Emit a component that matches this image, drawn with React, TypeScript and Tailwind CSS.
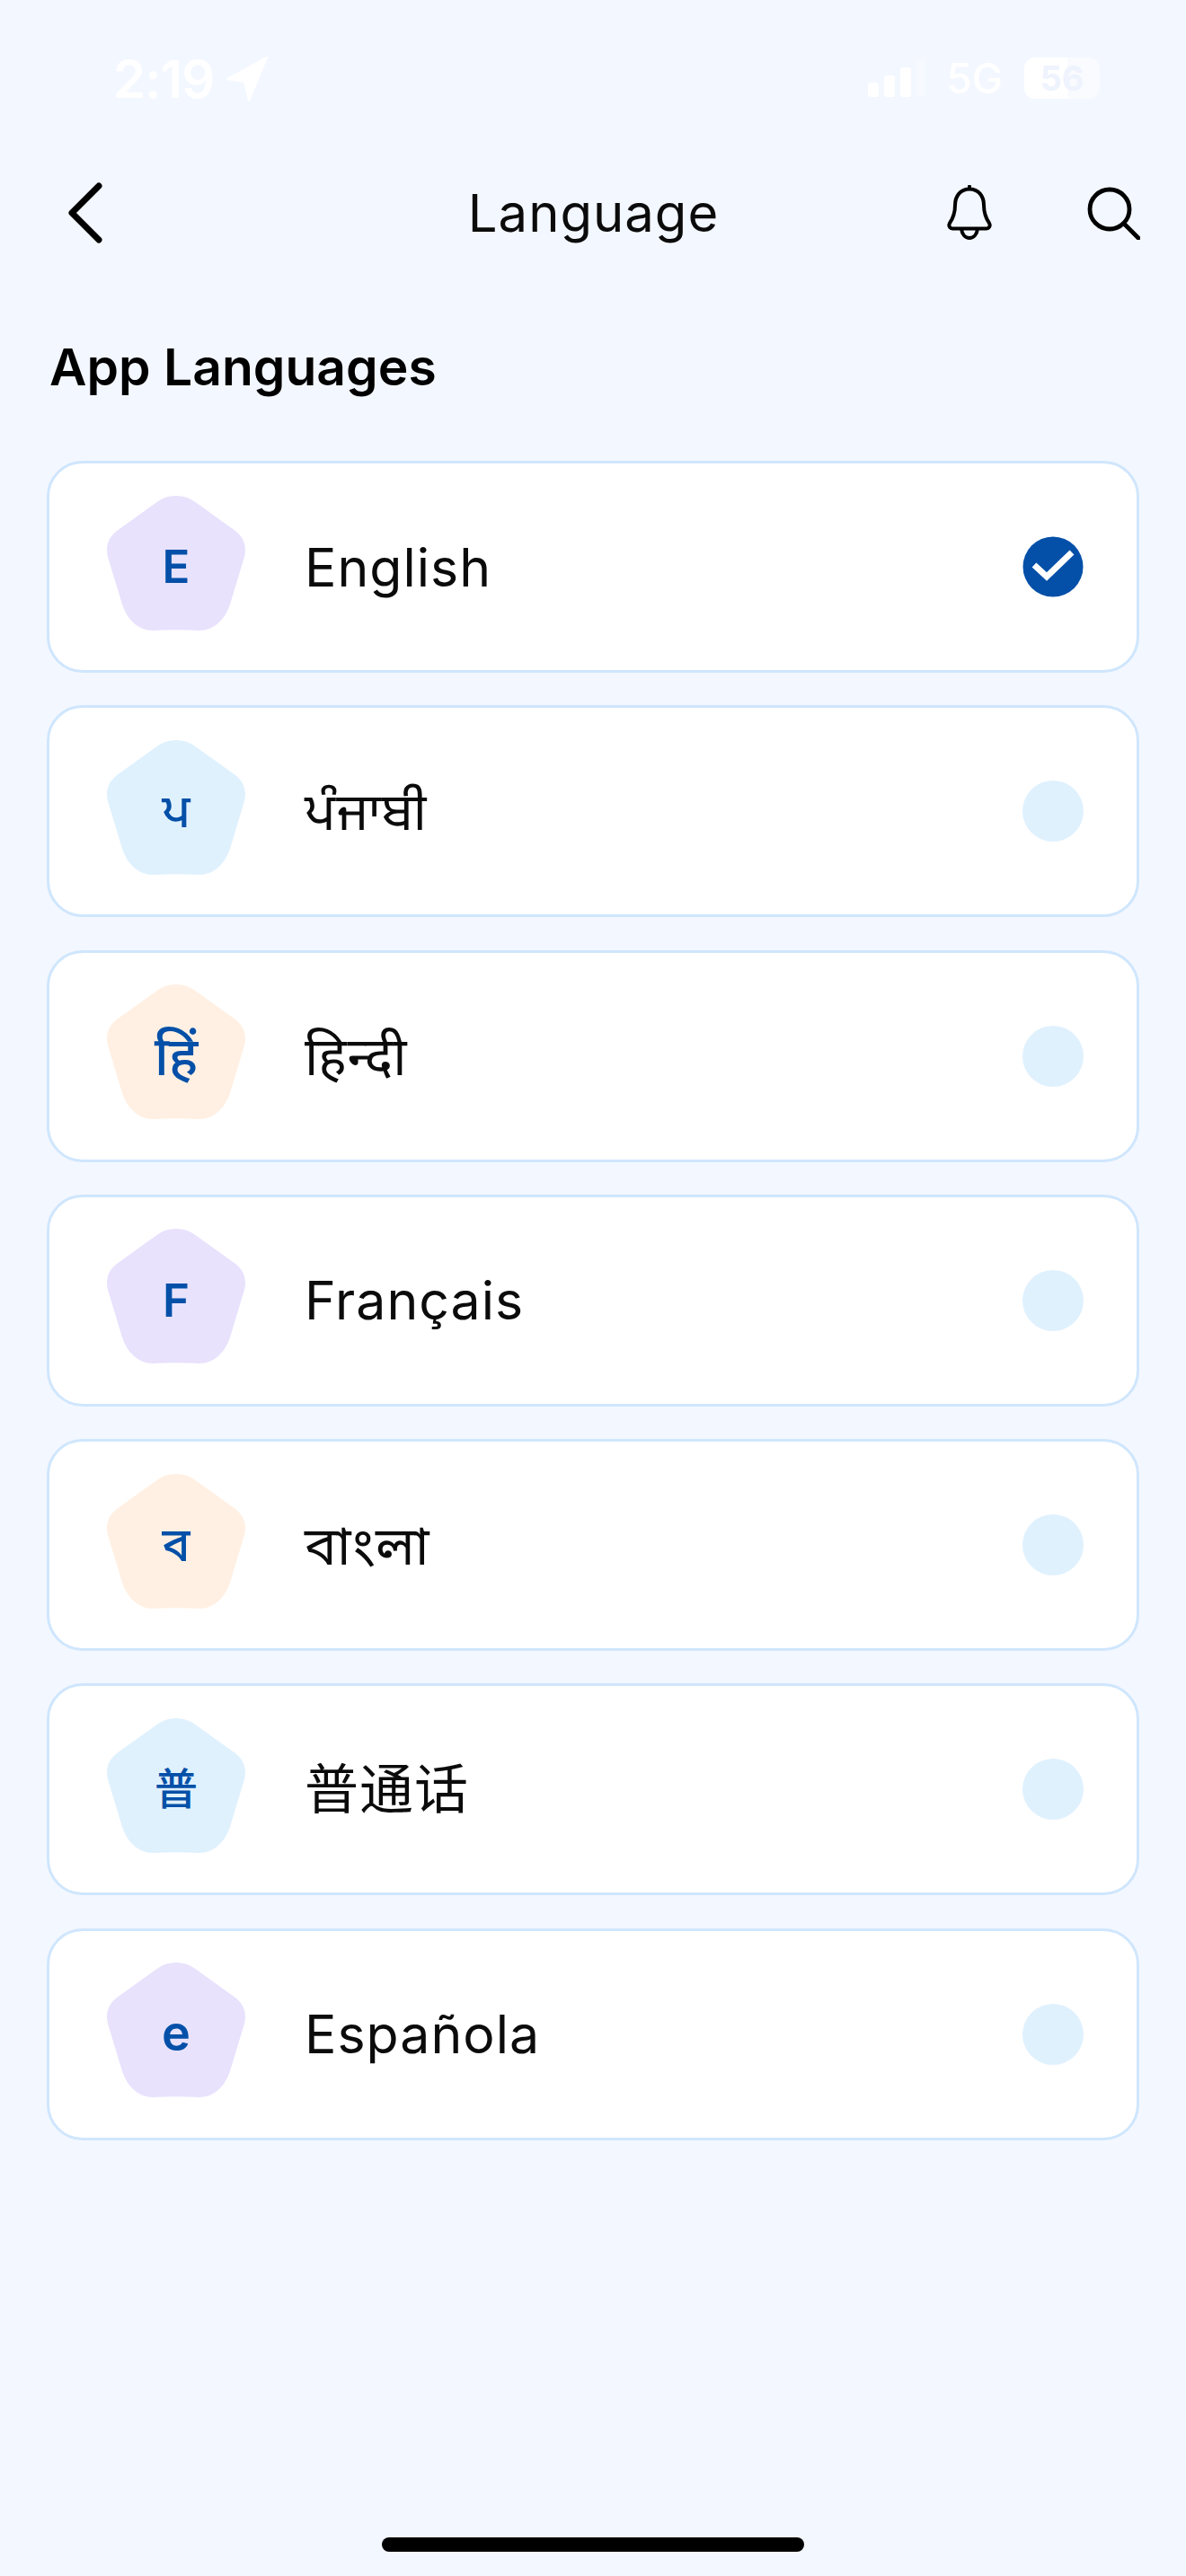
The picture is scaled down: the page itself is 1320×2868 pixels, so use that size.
import React from "react";

const PENTAGON =
  "M57 6 C68 -2 86 -2 97 6 L143 39 C152 46 156 56 153 68 L137 121 C131 139 118 150 103 150 C86 149 68 149 51 150 C36 150 23 139 17 121 L1 68 C-2 56 2 46 11 39 Z";

type Row = { glyph: string; label: string; tone: string; selected?: boolean; glyphClass: string; labelClass: string };

const rows: Row[] = [
  { glyph: "E", label: "English", tone: "#e8e2fd", selected: true, glyphClass: "text-[51px] font-semibold", labelClass: "text-[59px]" },
  { glyph: "ਪ", label: "ਪੰਜਾਬੀ", tone: "#e0f1fe", glyphClass: "text-[52px] font-medium", labelClass: "text-[58px]" },
  { glyph: "हिं", label: "हिन्दी", tone: "#fff0e3", glyphClass: "text-[60px] font-medium", labelClass: "text-[59px]" },
  { glyph: "F", label: "Français", tone: "#e8e2fd", glyphClass: "text-[51px] font-semibold", labelClass: "text-[59px]" },
  { glyph: "ব", label: "বাংলা", tone: "#fff0e3", glyphClass: "text-[52px] font-medium", labelClass: "text-[60px]" },
  { glyph: "普", label: "普通话", tone: "#e0f1fe", glyphClass: "text-[48px] font-medium", labelClass: "text-[60px]" },
  { glyph: "e", label: "Española", tone: "#e8e2fd", glyphClass: "text-[54px] font-semibold", labelClass: "text-[59px]" },
];

const FONT =
  "font-['Inter','Noto_Sans','Noto_Sans_Devanagari','Noto_Sans_Gurmukhi','Noto_Sans_Bengali','Noto_Sans_CJK_SC',sans-serif]";

function LanguageRow({ row }: { row: Row }) {
  return (
    <div className="flex h-[236px] items-center rounded-[40px] border-[3px] border-[#cfe6fd] bg-white pl-[64px] pr-[59px]">
      <div className="relative mb-[8px] flex h-[151px] w-[154px] shrink-0 items-center justify-center">
        <svg className="absolute inset-0" width="154" height="151" viewBox="0 0 154 151">
          <path d={PENTAGON} fill={row.tone} />
        </svg>
        <span className={`relative mt-[7px] leading-none text-[#0450a8] ${row.glyphClass}`}>{row.glyph}</span>
      </div>
      <span className={`ml-[66px] flex-1 leading-none tracking-[1px] text-[#0b0b0b] ${row.labelClass}`}>{row.label}</span>
      {row.selected ? (
        <svg width="68" height="68" viewBox="0 0 68 68" className="shrink-0">
          <circle cx="34" cy="34" r="33.5" fill="#0450a8" />
          <path d="M13 32 L27 45 L55 18" fill="none" stroke="#fff" strokeWidth="7" />
        </svg>
      ) : (
        <div className="h-[68px] w-[68px] shrink-0 rounded-full bg-[#e0f1fe]" />
      )}
    </div>
  );
}

export default function App() {
  return (
    <div className={`flex h-[2868px] w-[1320px] flex-col bg-[#f3f7ff] ${FONT}`}>
      {/* status bar */}
      <div className="flex h-[150px] items-start justify-between pl-[126px] pr-[96px] pt-[58px] text-white">
        <div className="flex items-center gap-[14px]">
          <span className="text-[58px] font-semibold leading-[60px] tracking-[-1px]">2:19</span>
          <svg width="46" height="50" viewBox="0 0 46 50">
            <path d="M45 1 L1 25 L20 28 L25 49 Z" fill="#fff" stroke="#fff" strokeWidth="2" strokeLinejoin="round" />
          </svg>
        </div>
        <div className="flex items-center gap-[23px] pt-[6px]">
          <svg width="66" height="46" viewBox="0 0 66 46">
            <rect x="2" y="28" width="12" height="16" rx="3" fill="#fff" />
            <rect x="20" y="20" width="12" height="24" rx="3" fill="#fff" />
            <rect x="38" y="11" width="12" height="33" rx="3" fill="#fff" />
            <rect x="56" y="1" width="10" height="43" rx="3" fill="#fff" fillOpacity="0.3" />
          </svg>
          <span className="text-[46px] font-medium leading-[46px]">5G</span>
          <span className="relative ml-[1px] flex h-[46px] w-[84px] items-center justify-center overflow-hidden rounded-[12px] bg-white/50 text-[38px] font-bold leading-none text-[#eef3fd]">
            <span className="absolute inset-y-0 left-0 w-[48px] bg-white" />
            <span className="relative">56</span>
          </span>
        </div>
      </div>

      {/* header */}
      <div className="mt-[50px] grid h-[74px] grid-cols-[1fr_auto_1fr] items-center pl-[72px] pr-[51px]">
        <svg width="44" height="70" viewBox="0 0 44 70">
          <path d="M38 5 L8 35 L38 65" fill="none" stroke="#000" strokeWidth="7" strokeLinecap="round" strokeLinejoin="round" />
        </svg>
        <span className="-translate-x-[10px] text-[58px] leading-none tracking-[1px] text-[#0b0b0b]">Language</span>
        <div className="flex items-center justify-end gap-[102px]">
          <svg width="56" height="62" viewBox="0 0 28 31">
            <path
              d="M14 2.2 c-5 0 -8 4 -8 9 c0 4 -1 7 -3 10 c-.8 1.4 0 3 1.5 3 h19 c1.5 0 2.3 -1.6 1.5 -3 c-2 -3 -3 -6 -3 -10 c0 -5 -3 -9 -8 -9 Z M14 .8 V2.2 M9.5 24.5 c.4 3 2.2 5 4.5 5 s4.1 -2 4.5 -5"
              fill="none"
              stroke="#000"
              strokeWidth="2"
              strokeLinecap="round"
              strokeLinejoin="round"
            />
          </svg>
          <svg width="60" height="60" viewBox="0 0 30 30">
            <circle cx="13" cy="13" r="11" fill="none" stroke="#000" strokeWidth="2.4" />
            <path d="M21 21 L29 29" fill="none" stroke="#000" strokeWidth="2.4" strokeLinecap="round" />
          </svg>
        </div>
      </div>

      <h1 className="ml-[55px] mt-[105px] text-[57px] font-semibold leading-[60px] text-black">App Languages</h1>

      <div className="mt-[74px] flex flex-col gap-[36.3px] pl-[52px] pr-[52px]">
        {rows.map((r) => (
          <LanguageRow key={r.label} row={r} />
        ))}
      </div>

      <div className="mb-[27px] mt-auto h-[16px] w-[470px] self-center rounded-full bg-black" />
    </div>
  );
}
